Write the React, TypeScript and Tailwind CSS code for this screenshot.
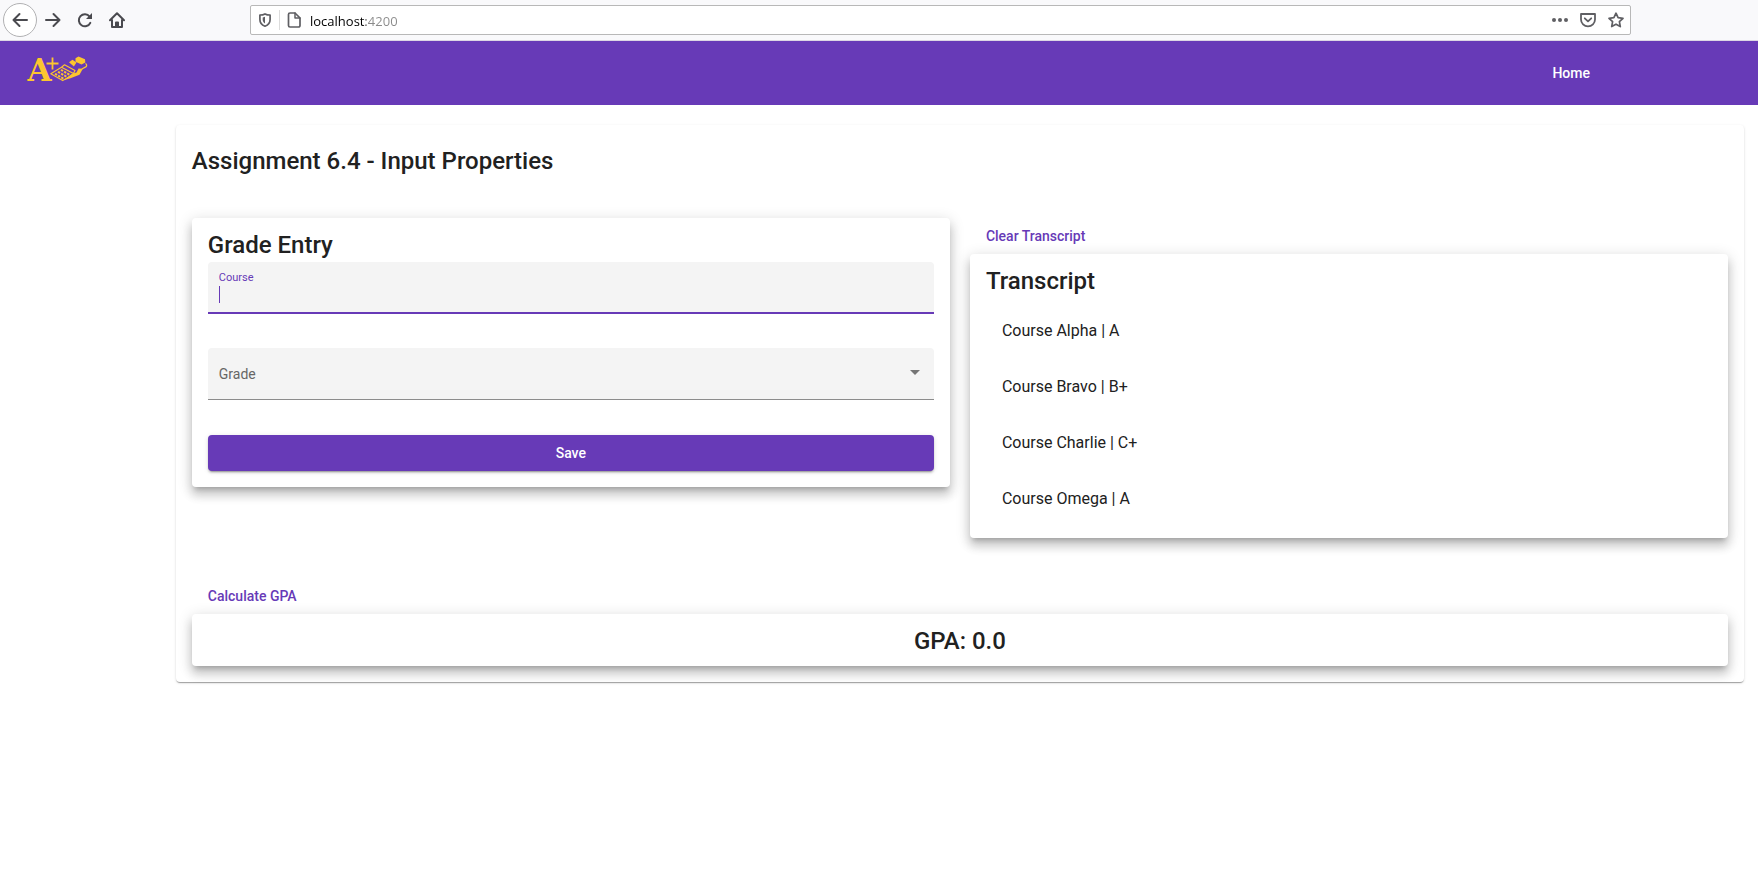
import { useState } from "react";
import type { ReactNode } from "react";

const raised =
  "rounded bg-white p-4 shadow-[0_5px_5px_-3px_rgba(0,0,0,0.2),0_8px_10px_1px_rgba(0,0,0,0.14),0_3px_14px_2px_rgba(0,0,0,0.12)]";

const cardTitle = "pt-0.5 text-2xl leading-[18px] font-medium";

const grades = ["A", "A-", "B+", "B", "B-", "C+", "C", "C-", "D+", "D", "D-", "F"];

const transcript = [
  { course: "Course Alpha", grade: "A" },
  { course: "Course Bravo", grade: "B+" },
  { course: "Course Charlie", grade: "C+" },
  { course: "Course Omega", grade: "A" },
];

function Glyph({ children }: { children: ReactNode }) {
  return (
    <svg viewBox="0 0 16 16" className="size-4 shrink-0" fill="none" stroke="currentColor" strokeWidth="2" strokeLinecap="round" strokeLinejoin="round" aria-hidden="true">
      {children}
    </svg>
  );
}

function BrowserBar() {
  const [address, setAddress] = useState("localhost:4200");

  return (
    <div className="flex h-[41px] items-center border-b border-[#dcd7e4] bg-[#f9f9fb] pl-[3px] text-[#4a4a4f]">
      <div className="flex w-[247px] shrink-0 items-center">
        <button aria-label="Back" className="flex size-[34px] items-center justify-center rounded-full border border-[#b1b1b3] bg-white">
          <Glyph><path d="M15 8H1.5M7.5 2 1.5 8l6 6" /></Glyph>
        </button>
        <button aria-label="Forward" className="flex size-8 items-center justify-center">
          <Glyph><path d="M1 8h13.5M8.500 2l6 6-6 6" /></Glyph>
        </button>
        <button aria-label="Reload" className="flex size-8 items-center justify-center">
          <Glyph>
            <path d="M12.600 4.600A6 6 0 1 0 13.300 10.800" />
            <path d="M15 1v6H9z" fill="currentColor" stroke="none" />
          </Glyph>
        </button>
        <button aria-label="Home page" className="flex size-8 items-center justify-center">
          <Glyph>
            <path d="M1 8.300 8 1.300l7 7M3 8v7h10V8" />
            <path d="M7 15v-4.500h2V15" />
          </Glyph>
        </button>
      </div>
      <div className="mr-[127px] flex h-[30px] flex-1 items-center rounded-xs border border-[#b8b8b8] bg-white px-[6px] text-[#5f5f63]">
        <Glyph>
          <path d="M8 1.900C6.500 2.700 4.600 3 2.900 3v4.500c0 3.200 2 5.600 5.100 6.700 3.100-1.100 5.100-3.500 5.100-6.700V3C11.400 3 9.500 2.700 8 1.900z" strokeWidth="1.700" />
          <path d="M8 4.800v6.600C6.400 10.500 5.700 9.200 5.700 7.500V5.400z" fill="currentColor" stroke="none" />
        </Glyph>
        <span className="mx-[6px] h-5 w-px bg-[#dcdcdc]" />
        <Glyph>
          <path d="M4 1h5l5 5v7.500a1.500 1.500 0 0 1-1.500 1.500h-8.500A1.500 1.500 0 0 1 2.500 13.500V2.500A1.500 1.500 0 0 1 4 1z" strokeWidth="1.700" />
          <path d="M9 1v5h5" strokeWidth="1.500" />
        </Glyph>
        <input
          type="text"
          aria-label="Address"
          value={address}
          onChange={(e) => setAddress(e.target.value)}
          className="ml-2 h-6 min-w-0 flex-1 bg-[linear-gradient(90deg,#000_56px,#8a8a8a_56px)] bg-clip-text pt-0.5 font-['Open_Sans',sans-serif] text-[13px] text-transparent caret-black outline-none"
        />
        <div className="flex items-center gap-3">
          <button aria-label="Page actions">
            <Glyph>
              <g fill="currentColor" stroke="none">
                <circle cx="2" cy="8" r="2" />
                <circle cx="8" cy="8" r="2" />
                <circle cx="14" cy="8" r="2" />
              </g>
            </Glyph>
          </button>
          <button aria-label="Save to Pocket">
            <Glyph>
              <path d="M1 2h14v5.500a7 6.800 0 0 1-14 0zM4.800 6.300 8 9.300l3.200-3" strokeWidth="1.800" />
            </Glyph>
          </button>
          <button aria-label="Bookmark this page">
            <Glyph>
              <path d="m8 1.200 2.100 4.500 4.900.6-3.600 3.400.9 4.900L8 12.200l-4.300 2.400.9-4.900L1 6.300l4.900-.6z" strokeWidth="1.700" />
            </Glyph>
          </button>
        </div>
      </div>
    </div>
  );
}

function Logo() {
  return (
    <svg viewBox="0 0 60 26" className="h-[26px] w-[60px] overflow-visible" role="img" aria-label="A plus">
      <text x="-0.500" y="24.500" fontSize="31" fontWeight="700" fill="#fdc62f" fontFamily="'DejaVu Serif', serif">A</text>
      <g fill="none" stroke="#fdc62f" strokeLinejoin="round">
        <path d="M24.500 1.500v12M18.500 7.500h12" strokeWidth="1.800" />
        <path d="M33.500 11.200 22.800 17.800 34.700 24.600 46.500 18" strokeWidth="1.100" />
        <path d="M27 17.800 35.500 22.600M30 15.800 38.800 20.800M33 13.800 42 19" strokeWidth="2" strokeDasharray="2.400 1.200" />
        <path d="M33.500 11.200 36.500 8.800 47 14.600 45.500 17.500z" strokeWidth="1.100" />
        <path d="M57.500 7.500c1.500 1 1.500 2.500.3 3.400l-4 2.100" strokeWidth="1.200" />
      </g>
      <g fill="#fdc62f">
        <path d="m41 6.300 3.500-2.500 4 2.700-2.600 3.900z" />
        <path d="m47.500 2.200 3-1.700 6.500 2.700.3 3.300-3.800 2-6-2.800z" />
        <path d="m35.500 24.200 8.500-6.500 4.500-1.200 2-4 4.300.3-3.300 6-9 3.500z" />
      </g>
    </svg>
  );
}

export default function App() {
  const [course, setCourse] = useState("");
  const [grade, setGrade] = useState("");

  return (
    <div className="min-h-screen bg-white pb-8 font-[Roboto,sans-serif] text-sm text-[#212121]">
      <BrowserBar />
      <header className="flex h-16 items-center justify-between bg-[#673ab7] pr-[152px] pl-7">
        <a href="#home" className="mb-2"><Logo /></a>
        <nav>
          <a href="#home" className="px-4 font-medium text-white">Home</a>
        </nav>
      </header>

      <main className="mt-5 mr-[14px] ml-[10%] rounded bg-white p-4 shadow-[0_2px_1px_-1px_rgba(0,0,0,0.2),0_1px_1px_0_rgba(0,0,0,0.14),0_1px_3px_0_rgba(0,0,0,0.12)]">
        <h1 className="mb-[37px] text-2xl leading-10 font-medium">Assignment 6.4 - Input Properties</h1>

        <div className="grid grid-cols-2 items-start gap-5">
          <form className={raised} onSubmit={(e) => e.preventDefault()}>
            <h2 className={`mb-2 ${cardTitle}`}>Grade Entry</h2>
            <div className="flex h-[52px] flex-col rounded-t border-b-2 border-[#673ab7] bg-[#f4f4f4] px-[11px] pt-2">
              <label htmlFor="course" className="text-[11px] leading-4 text-[#673ab7]">Course</label>
              <div className="flex h-[17px]">
                {course === "" && <span className="w-px bg-[#673ab7]" />}
                <input
                  id="course"
                  type="text"
                  value={course}
                  onChange={(e) => setCourse(e.target.value)}
                  className="w-full bg-transparent caret-[#673ab7] outline-none"
                />
              </div>
            </div>
            <div className="mt-[34px] grid h-[52px] items-center rounded-t border-b border-[#8c8c8c] bg-[#f4f4f4]">
              <select
                id="grade"
                value={grade}
                onChange={(e) => setGrade(e.target.value)}
                className="col-start-1 row-start-1 h-full w-full appearance-none bg-transparent px-[11px] outline-none"
              >
                <option value=""></option>
                {grades.map((g) => (
                  <option key={g} value={g}>{g}</option>
                ))}
              </select>
              {grade === "" && (
                <label htmlFor="grade" className="pointer-events-none col-start-1 row-start-1 pl-[11px] text-[#666]">Grade</label>
              )}
              <svg viewBox="0 0 10 5" className="pointer-events-none col-start-1 row-start-1 mr-[14px] mb-[2px] h-[5px] w-[10px] justify-self-end" fill="#757575" aria-hidden="true">
                <path d="M0 0h10L5 5z" />
              </svg>
            </div>
            <button
              type="submit"
              className="mt-[35px] h-9 w-full rounded bg-[#673ab7] font-medium text-white shadow-[0_3px_1px_-2px_rgba(0,0,0,0.2),0_2px_2px_0_rgba(0,0,0,0.14),0_1px_5px_0_rgba(0,0,0,0.12)]"
            >
              Save
            </button>
          </form>

          <section>
            <button className="block h-9 px-4 font-medium text-[#673ab7]">Clear Transcript</button>
            <div className={raised}>
              <h2 className={`mb-4 ${cardTitle}`}>Transcript</h2>
              <ul className="flex flex-col gap-2 px-4 text-base">
                {transcript.map((t) => (
                  <li key={t.course} className="flex h-12 items-center pt-0.5">{t.course} | {t.grade}</li>
                ))}
              </ul>
            </div>
          </section>
        </div>

        <section className="mt-10">
          <button className="block h-9 px-4 font-medium text-[#673ab7]">Calculate GPA</button>
          <div className={raised}>
            <h2 className={`text-center ${cardTitle}`}>GPA: 0.0</h2>
          </div>
        </section>
      </main>
    </div>
  );
}
